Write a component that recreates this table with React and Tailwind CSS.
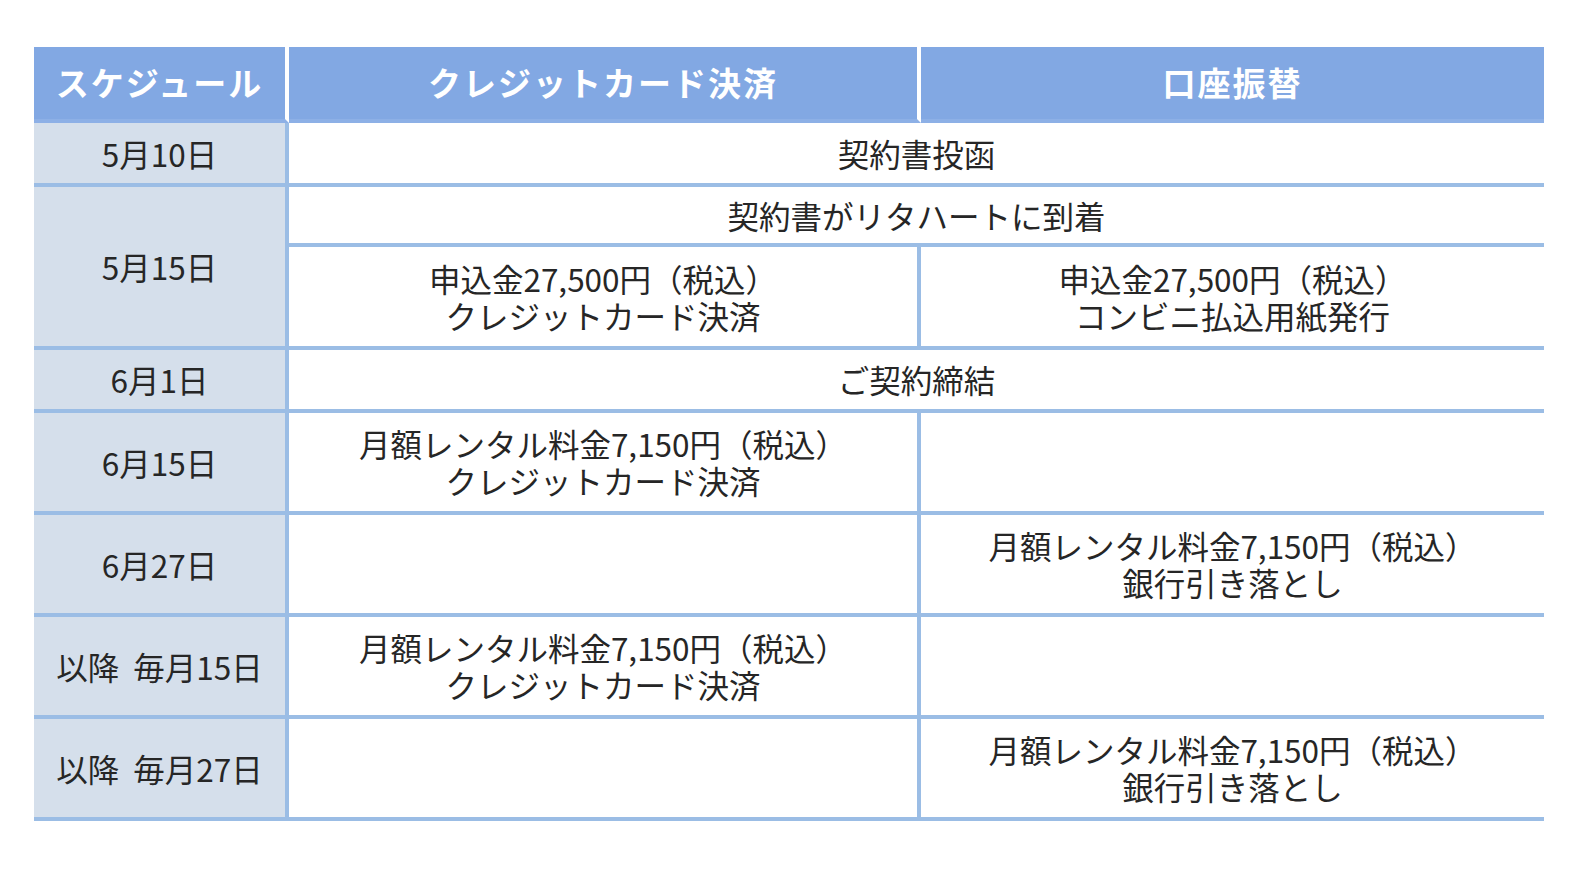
export default function App() {
  const font = { fontFamily: '"Noto Sans CJK JP", "Noto Sans", sans-serif' };
  const base = "border-b-4 border-[#9bbde5] text-center align-middle text-[31.5px] leading-[37px] text-[#262626] p-0";
  const td = base + " border-r-4";
  const lab = base + " border-r-4 bg-[#d5dfeb]";
  const lastTd = base;
  const th = "h-[76px] p-0 bg-[#82a8e3] border-b-4 border-b-[#8db0e6] text-white font-bold text-[33px] tracking-[2px] align-middle";
  return (
    <div className="w-[1596px] h-[882px] bg-white pt-[47px] pl-[34px]" style={font}>
      <table className="w-[1510px] border-separate border-spacing-0 table-fixed">
        <colgroup>
          <col className="w-[255px]" />
          <col className="w-[632px]" />
          <col className="w-[623px]" />
        </colgroup>
        <thead>
          <tr>
            <th className={th + " border-r-4 border-r-white"}>スケジュール</th>
            <th className={th + " border-r-4 border-r-white"}>クレジットカード決済</th>
            <th className={th}>口座振替</th>
          </tr>
        </thead>
        <tbody>
          <tr className="h-[64px]">
            <td className={lab}>5月10日</td>
            <td colSpan={2} className={lastTd}>契約書投函</td>
          </tr>
          <tr className="h-[60px]">
            <td rowSpan={2} className={lab}>5月15日</td>
            <td colSpan={2} className={lastTd}>契約書がリタハートに到着</td>
          </tr>
          <tr className="h-[103px]">
            <td className={td}>申込金27,500円（税込）<br />クレジットカード決済</td>
            <td className={lastTd}>申込金27,500円（税込）<br />コンビニ払込用紙発行</td>
          </tr>
          <tr className="h-[63px]">
            <td className={lab}>6月1日</td>
            <td colSpan={2} className={lastTd}>ご契約締結</td>
          </tr>
          <tr className="h-[102px]">
            <td className={lab}>6月15日</td>
            <td className={td}>月額レンタル料金7,150円（税込）<br />クレジットカード決済</td>
            <td className={lastTd}></td>
          </tr>
          <tr className="h-[102px]">
            <td className={lab}>6月27日</td>
            <td className={td}></td>
            <td className={lastTd}>月額レンタル料金7,150円（税込）<br />銀行引き落とし</td>
          </tr>
          <tr className="h-[102px]">
            <td className={lab}><span className="mr-[14px]">以降</span>毎月15日</td>
            <td className={td}>月額レンタル料金7,150円（税込）<br />クレジットカード決済</td>
            <td className={lastTd}></td>
          </tr>
          <tr className="h-[102px]">
            <td className={lab}><span className="mr-[14px]">以降</span>毎月27日</td>
            <td className={td}></td>
            <td className={lastTd}>月額レンタル料金7,150円（税込）<br />銀行引き落とし</td>
          </tr>
        </tbody>
      </table>
    </div>
  );
}
